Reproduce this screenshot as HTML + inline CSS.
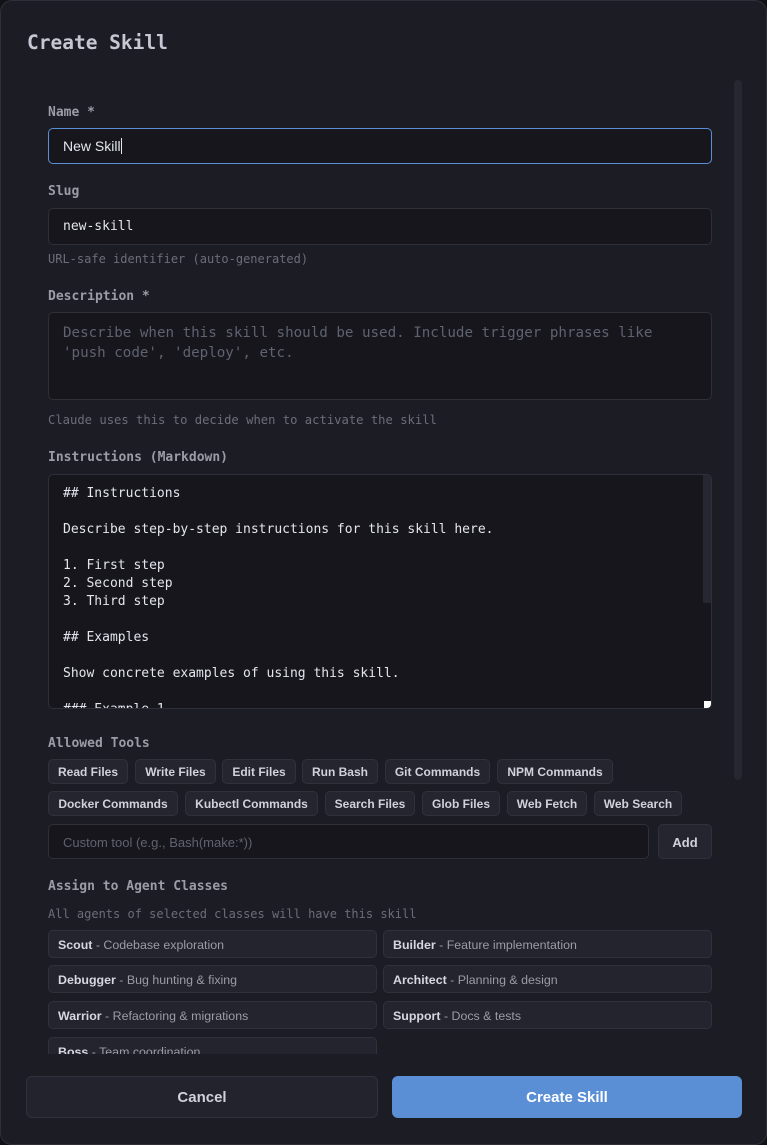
<!DOCTYPE html>
<html><head><meta charset="utf-8"><style>
*{box-sizing:border-box;margin:0;padding:0}
body{width:767px;height:1145px;background:#111116;overflow:hidden;position:relative;font-family:"Liberation Sans",sans-serif}
.modal{position:absolute;left:0;top:0;width:767px;height:1145px;background:#1c1c24;box-shadow:inset 0 0 0 1px #2e2f38;border-radius:12px;overflow:hidden}
.a{position:absolute}
.mono{font-family:"DejaVu Sans Mono","Liberation Mono",monospace}
.lbl{font-family:"DejaVu Sans Mono",monospace;font-size:13px;color:#9a9ca6;font-weight:bold;left:48px}
.sub{font-family:"DejaVu Sans Mono",monospace;font-size:12px;color:#6b6d78;left:48px}
.inp{left:48px;width:664px;background:#16161c;border:1px solid #2e2f38;border-radius:5px}
.chip{position:absolute;height:25px;background:#24252e;border:1px solid #30313b;border-radius:5px;color:#d0d2da;font-weight:bold;font-size:12px;line-height:25px;text-align:center}
.ag{position:absolute;width:329px;height:28px;background:#23242d;border:1px solid #30313b;border-radius:5px;font-size:12.4px;line-height:28px;padding-left:9px;color:#9a9ca6}
.ag b{color:#d6d8e0}
</style></head><body><div class="modal">
<div class="a mono" style="left:27px;top:31px;font-size:19.5px;font-weight:bold;color:#c5c8d2">Create Skill</div>
<div class="a" style="left:734px;top:80px;width:8px;height:700px;background:#262730;border-radius:4px"></div>

<div class="a lbl" style="top:105px">Name *</div>
<div class="a inp" style="top:128px;height:36px;border-color:#5a8fd6"></div>
<div class="a" style="left:63px;top:138px;font-size:14px;color:#e4e6ee">New Skill<span style="display:inline-block;width:1px;height:16px;background:#e4e6ee;vertical-align:-3px"></span></div>

<div class="a lbl" style="top:184px">Slug</div>
<div class="a inp" style="top:208px;height:37px"></div>
<div class="a mono" style="left:63px;top:219px;font-size:13px;color:#e4e6ee">new-skill</div>
<div class="a sub" style="top:252px">URL-safe identifier (auto-generated)</div>

<div class="a lbl" style="top:289px">Description *</div>
<div class="a inp" style="top:312px;height:88px"></div>
<div class="a mono" style="left:63px;top:323px;font-size:14.2px;line-height:20px;color:#5f6270">Describe when this skill should be used. Include trigger phrases like<br>'push code', 'deploy', etc.</div>
<div class="a sub" style="top:413px;font-size:12.2px">Claude uses this to decide when to activate the skill</div>

<div class="a lbl" style="top:450px">Instructions (Markdown)</div>
<div class="a inp" style="top:474px;height:235px;overflow:hidden">
<div class="mono" style="position:absolute;left:14px;top:10px;font-size:13px;line-height:18px;color:#e4e6ee;white-space:pre">## Instructions

Describe step-by-step instructions for this skill here.

1. First step
2. Second step
3. Third step

## Examples

Show concrete examples of using this skill.

### Example 1</div>
<div style="position:absolute;right:0;top:0;width:8px;height:128px;background:#262730"></div>
<div style="position:absolute;right:0;bottom:0;width:7px;height:7px;background:#fff"></div>
</div>

<div class="a lbl" style="top:736px">Allowed Tools</div>
<div class="chip" style="left:48px;top:759px;width:80px">Read Files</div>
<div class="chip" style="left:135px;top:759px;width:81px">Write Files</div>
<div class="chip" style="left:222px;top:759px;width:74px">Edit Files</div>
<div class="chip" style="left:302px;top:759px;width:76px">Run Bash</div>
<div class="chip" style="left:385px;top:759px;width:105px">Git Commands</div>
<div class="chip" style="left:497px;top:759px;width:116px">NPM Commands</div>
<div class="chip" style="left:48px;top:791px;width:130px">Docker Commands</div>
<div class="chip" style="left:185px;top:791px;width:133px">Kubectl Commands</div>
<div class="chip" style="left:325px;top:791px;width:90px">Search Files</div>
<div class="chip" style="left:422px;top:791px;width:78px">Glob Files</div>
<div class="chip" style="left:507px;top:791px;width:80px">Web Fetch</div>
<div class="chip" style="left:594px;top:791px;width:88px">Web Search</div>
<div class="a inp" style="top:824px;width:601px;height:35px"></div>
<div class="a" style="left:63px;top:835px;font-size:13px;color:#5f6270">Custom tool (e.g., Bash(make:*))</div>
<div class="a" style="left:658px;top:824px;width:54px;height:35px;background:#24252e;border:1px solid #30313b;border-radius:5px;color:#d0d2da;font-weight:bold;font-size:13px;line-height:35px;text-align:center">Add</div>

<div class="a lbl" style="top:879px">Assign to Agent Classes</div>
<div class="a sub" style="top:907px">All agents of selected classes will have this skill</div>
<div class="a" style="left:0;top:925px;width:767px;height:129px;overflow:hidden">
<div class="ag" style="left:48px;top:5px"><b>Scout</b> - Codebase exploration</div>
<div class="ag" style="left:383px;top:5px"><b>Builder</b> - Feature implementation</div>
<div class="ag" style="left:48px;top:40px"><b>Debugger</b> - Bug hunting &amp; fixing</div>
<div class="ag" style="left:383px;top:40px"><b>Architect</b> - Planning &amp; design</div>
<div class="ag" style="left:48px;top:76px"><b>Warrior</b> - Refactoring &amp; migrations</div>
<div class="ag" style="left:383px;top:76px"><b>Support</b> - Docs &amp; tests</div>
<div class="ag" style="left:48px;top:112px"><b>Boss</b> - Team coordination</div>
</div>

<div class="a" style="left:26px;top:1076px;width:352px;height:42px;background:#22232c;border:1px solid #30313b;border-radius:6px;color:#d0d2da;font-weight:bold;font-size:15px;line-height:42px;text-align:center">Cancel</div>
<div class="a" style="left:392px;top:1076px;width:350px;height:42px;background:#5a8fd6;border-radius:6px;color:#fff;font-weight:bold;font-size:15px;line-height:44px;text-align:center">Create Skill</div>
</div></body></html>
